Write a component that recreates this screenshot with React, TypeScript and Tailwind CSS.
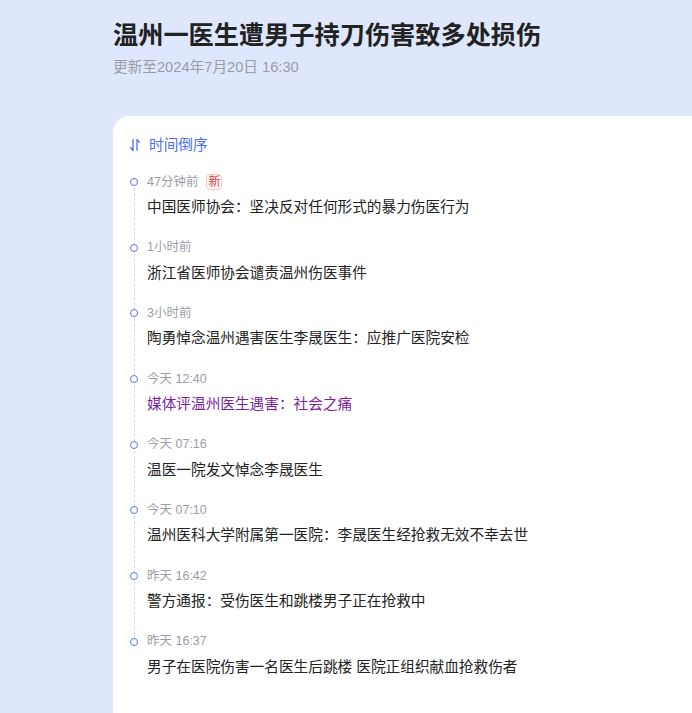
const items = [
  { time: '47分钟前', title: '中国医师协会：坚决反对任何形式的暴力伤医行为', isNew: true },
  { time: '1小时前', title: '浙江省医师协会谴责温州伤医事件' },
  { time: '3小时前', title: '陶勇悼念温州遇害医生李晟医生：应推广医院安检' },
  { time: '今天 12:40', title: '媒体评温州医生遇害：社会之痛', visited: true },
  { time: '今天 07:16', title: '温医一院发文悼念李晟医生' },
  { time: '今天 07:10', title: '温州医科大学附属第一医院：李晟医生经抢救无效不幸去世' },
  { time: '昨天 16:42', title: '警方通报：受伤医生和跳楼男子正在抢救中' },
  { time: '昨天 16:37', title: '男子在医院伤害一名医生后跳楼 医院正组织献血抢救伤者' },
];

function SortIcon() {
  return (
    <svg width="10" height="12" viewBox="0 0 10 12" fill="none" stroke="currentColor" strokeWidth="1.3" strokeLinecap="round">
      <path d="M3 0.7V11.3L0.7 8.8" />
      <path d="M7 11.3V0.7L9.3 3.2" />
    </svg>
  );
}

export default function App() {
  return (
    <div
      className="min-h-screen bg-[#dfe7fd] pl-[113px] pt-[17px] overflow-hidden"
      style={{ fontFamily: '"Liberation Sans", "Noto Sans CJK SC", sans-serif' }}
    >
      {/* Header */}
      <h1 className="text-[25.2px] leading-[36px] font-bold text-[#222222]">温州一医生遭男子持刀伤害致多处损伤</h1>
      <div className="mt-[3px] text-[14.67px] leading-[22px] text-[#9a9da7]">更新至2024年7月20日 16:30</div>

      {/* Card */}
      <div className="mt-[38px] min-h-[600px] rounded-tl-2xl bg-white pl-[17px] pt-[18px]">
        <div className="flex h-[22px] items-center text-[#4e6ef2]">
          <SortIcon />
          <span className="ml-[9px] text-[14.67px] leading-[22px]">时间倒序</span>
        </div>

        <div className="mt-[16px]">
          {items.map((item, i) => (
            <div key={i} className="relative pl-[17px] pb-[18.67px]">
              {/* dot */}
              <div className="absolute left-0 top-[6px] h-[8px] w-[8px] rounded-full border-[1.5px] border-[#5b74ee] bg-white" />
              {/* dashed line */}
              {i < items.length - 1 && (
                <div className="absolute left-[3.5px] top-[16px] bottom-[-7px] border-l border-dashed border-[#d5d8e0]" />
              )}
              <div className="flex h-[20px] items-center text-[12.5px] text-[#9a9da7]">
                <span>{item.time}</span>
                {item.isNew && (
                  <span className="ml-[8px] flex h-[16px] w-[16px] items-center justify-center rounded-[4px] border border-[#fcc3c0] text-[12px] leading-none text-[#f73131]">
                    新
                  </span>
                )}
              </div>
              <div
                className={`mt-[3px] text-[14.67px] leading-[24px] ${item.visited ? 'text-[#7b1fa2]' : 'text-[#222222]'}`}
              >
                {item.title}
              </div>
            </div>
          ))}
        </div>
      </div>
    </div>
  );
}
